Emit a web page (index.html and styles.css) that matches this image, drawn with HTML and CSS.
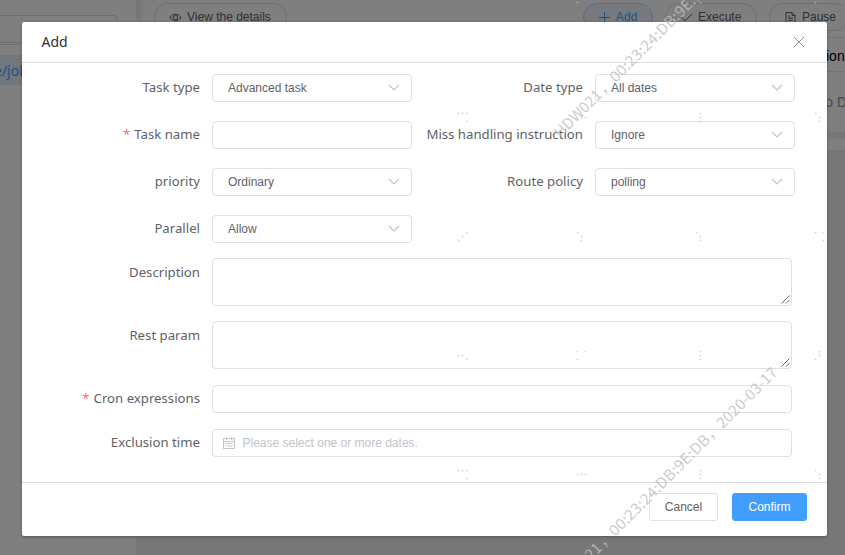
FILE: index.html
```
<!DOCTYPE html>
<html lang="en">
<head>
<meta charset="utf-8">
<title>Add task</title>
<link rel="stylesheet" href="styles.css">
</head>
<body>
<div class="page">
  <aside class="side">
    <div class="side-search"><div class="side-input"></div></div>
    <div class="side-item">e/job</div>
  </aside>
  <main class="main">
    <div class="card">
      <div class="toolbar">
        <button class="pill view"><svg width="13" height="13" viewBox="0 0 13 13"><path d="M.7 6.500Q6.500-.3 12.300 6.500 6.500 13.300.7 6.500Z"/><circle cx="6.500" cy="6.500" r="2.100"/></svg>View the details</button>
        <button class="pill add"><svg width="13" height="13" viewBox="0 0 13 13"><path d="M6.500 1v11M1 6.500h11"/></svg>Add</button>
        <button class="pill run"><svg width="13" height="13" viewBox="0 0 13 13"><path d="M2 6.500l3 3.500 7-7"/></svg>Execute</button>
        <button class="pill pause"><svg width="13" height="13" viewBox="0 0 13 13"><path d="M2 1.500h6l3 3v7.500H2zM8 1.500v3h3M4 5h2M4 7.200h5M4 9.400h5"/></svg>Pause</button>
      </div>
      <div class="thead">ion</div>
      <div class="empty">No Data</div>
    </div>
    <div class="card second"></div>
  </main>
</div>
<div class="mask"></div>
<section class="dialog">
  <header class="dialog-head"><span>Add</span><svg width="12" height="12" viewBox="0 0 12 12"><path d="M1 1l10 10M11 1L1 11"/></svg></header>
  <div class="form">
    <div class="pair">
      <label class="label"><span>Task type</span></label><div class="field">Advanced task<svg class="arrow" width="12" height="8" viewBox="0 0 12 8"><path d="M1 1l5 5 5-5"/></svg></div>
      <label class="label"><span>Date type</span></label><div class="field">All dates<svg class="arrow" width="12" height="8" viewBox="0 0 12 8"><path d="M1 1l5 5 5-5"/></svg></div>
      <label class="label req"><span>Task name</span></label><div class="field"></div>
      <label class="label"><span>Miss handling instruction</span></label><div class="field">Ignore<svg class="arrow" width="12" height="8" viewBox="0 0 12 8"><path d="M1 1l5 5 5-5"/></svg></div>
      <label class="label"><span>priority</span></label><div class="field">Ordinary<svg class="arrow" width="12" height="8" viewBox="0 0 12 8"><path d="M1 1l5 5 5-5"/></svg></div>
      <label class="label"><span>Route policy</span></label><div class="field">polling<svg class="arrow" width="12" height="8" viewBox="0 0 12 8"><path d="M1 1l5 5 5-5"/></svg></div>
      <label class="label"><span>Parallel</span></label><div class="field">Allow<svg class="arrow" width="12" height="8" viewBox="0 0 12 8"><path d="M1 1l5 5 5-5"/></svg></div>
    </div>
    <div class="row tall"><label class="label"><span>Description</span></label><div class="field area"><svg class="grip" width="9" height="9" viewBox="0 0 9 9"><path d="M.5 8.500l8-8M5 8.500l3.500-3.500"/></svg></div></div>
    <div class="row tall"><label class="label"><span>Rest param</span></label><div class="field area"><svg class="grip" width="9" height="9" viewBox="0 0 9 9"><path d="M.5 8.500l8-8M5 8.500l3.500-3.500"/></svg></div></div>
    <div class="row tight"><label class="label req"><span>Cron expressions</span></label><div class="field"></div></div>
    <div class="row"><label class="label"><span>Exclusion time</span></label><div class="field date"><svg width="12" height="12" viewBox="0 0 12 12"><path d="M.5 1.500h11v10H.5zM.5 4.500h11M3.500 0v3M8.500 0v3M2.500 6.500h2M5 6.500h2M7.500 6.500h2M2.500 9h2M5 9h2M7.500 9h2"/></svg>Please select one or more dates.</div></div>
  </div>
  <footer class="dialog-foot"><button class="btn">Cancel</button><button class="btn primary">Confirm</button></footer>
</section>
<svg class="watermark" width="845" height="555" viewBox="0 0 845 555">
  <defs><path id="p" d="M-1.500 0h3M0-1.500v3"/></defs>
  <g class="dots">
    <use href="#p" x="577.5" y="2.500"/><use href="#p" x="700.5" y="2.500"/><use href="#p" x="815.5" y="2.500"/>
    <use href="#p" x="458.5" y="113.500"/><use href="#p" x="462.5" y="113.500"/><use href="#p" x="466.5" y="113.500"/><use href="#p" x="466.5" y="121.500"/>
    <use href="#p" x="581.5" y="117.500"/><use href="#p" x="585.5" y="117.500"/>
    <use href="#p" x="700.5" y="113.500"/><use href="#p" x="700.5" y="117.500"/><use href="#p" x="700.5" y="121.500"/>
    <use href="#p" x="815.5" y="113.500"/><use href="#p" x="819.5" y="117.500"/><use href="#p" x="819.5" y="121.500"/>
    <use href="#p" x="458.5" y="240.500"/><use href="#p" x="462.5" y="236.500"/><use href="#p" x="466.5" y="232.500"/>
    <use href="#p" x="577.5" y="232.500"/><use href="#p" x="581.5" y="236.500"/><use href="#p" x="581.5" y="240.500"/>
    <use href="#p" x="696.5" y="232.500"/><use href="#p" x="700.5" y="236.500"/><use href="#p" x="700.5" y="240.500"/>
    <use href="#p" x="815.5" y="232.500"/><use href="#p" x="823.5" y="232.500"/><use href="#p" x="823.5" y="240.500"/>
    <use href="#p" x="458.5" y="355.500"/><use href="#p" x="462.5" y="355.500"/><use href="#p" x="466.5" y="359.500"/>
    <use href="#p" x="577.5" y="351.500"/><use href="#p" x="585.5" y="351.500"/><use href="#p" x="577.5" y="359.500"/>
    <use href="#p" x="700.5" y="351.500"/><use href="#p" x="700.5" y="355.500"/><use href="#p" x="700.5" y="359.500"/>
    <use href="#p" x="819.5" y="351.500"/><use href="#p" x="819.5" y="355.500"/><use href="#p" x="815.5" y="359.500"/>
    <use href="#p" x="458.5" y="470.500"/><use href="#p" x="462.5" y="470.500"/><use href="#p" x="466.5" y="470.500"/><use href="#p" x="466.5" y="478.500"/>
    <use href="#p" x="577.5" y="474.500"/><use href="#p" x="581.5" y="474.500"/><use href="#p" x="585.5" y="474.500"/>
    <use href="#p" x="700.5" y="470.500"/><use href="#p" x="700.5" y="474.500"/><use href="#p" x="700.5" y="478.500"/>
    <use href="#p" x="815.5" y="470.500"/><use href="#p" x="819.5" y="474.500"/><use href="#p" x="819.5" y="478.500"/>
  </g>
  <g class="mark" transform="translate(560.5 138.5) rotate(-45)"><text x="0" textLength="60" lengthAdjust="spacingAndGlyphs">HDW021</text><text x="61.500">，</text><text x="78" textLength="136" lengthAdjust="spacingAndGlyphs">00:23:24:DB:9E:DB</text></g>
  <g class="mark" transform="translate(560.5 591.5) rotate(-45)"><text x="0" textLength="60" lengthAdjust="spacingAndGlyphs">HDW021</text><text x="61.500">，</text><text x="77" textLength="136" lengthAdjust="spacingAndGlyphs">00:23:24:DB:9E:DB</text><text x="213.500">，</text><text x="229.500" textLength="79" lengthAdjust="spacingAndGlyphs">2020-03-17</text></g>
</svg>
</body>
</html>
```
FILE: styles.css
```
* { box-sizing: border-box; }
body { margin: 0; width: 845px; height: 555px; overflow: hidden; font-family: "Liberation Sans", sans-serif; }
svg { fill: none; stroke: currentColor; flex: none; }
button { font-family: inherit; }
.page { display: flex; gap: 6px; width: 845px; height: 555px; background: #eeeeee; overflow: hidden; }
.side { width: 136px; background: #fff; font-family: "Noto Sans", sans-serif; font-size: 14px; flex: none; }
.side-search { height: 43px; padding-top: 15px; border-bottom: 1px solid #dcdfe6; }
.side-input { width: 118px; height: 30px; border: 1px solid #dcdfe6; border-left: 0; border-radius: 0 4px 4px 0; }
.side-item { margin-top: 12px; height: 30px; line-height: 31px; margin-right: 8px; text-indent: -6px; background: #e3eefb; color: #409eff; }
.main { flex: 1; min-width: 0; display: flex; flex-direction: column; gap: 7px; }
.card { height: 132px; background: #fff; overflow: hidden; flex: none; }
.second { height: 11px; }
.toolbar { display: flex; height: 38px; padding: 3px 0 0 12px; border-bottom: 1px solid #e4e7ed; }
.pill { display: flex; align-items: center; gap: 5px; height: 28px; padding: 0 14px; border: 1px solid #dcdfe6; border-radius: 14px; background: #fff; color: #606266; font-size: 12px; white-space: nowrap; flex: none; }
.view { width: 133px; }
.add { width: 70px; margin-left: 296px; background: #ecf5ff; border-color: #b3d8ff; color: #409eff; }
.run { width: 92px; margin-left: 12px; }
.pause { width: 80px; margin-left: 12px; }
.thead { height: 34px; line-height: 36px; padding-left: 684px; border-bottom: 1px solid #e4e7ed; color: #000; font-size: 14px; }
.empty { padding: 20px 0 0 672px; font: 14px "Noto Sans", sans-serif; color: #909399; white-space: nowrap; }
.mask { position: absolute; inset: 0; background: rgba(0, 0, 0, .5); }
.dialog { position: absolute; left: 22px; top: 22px; width: 805px; height: 514px; background: #fff; border-radius: 2px; box-shadow: 0 1px 3px rgba(0, 0, 0, .3); }
.dialog-head { display: flex; align-items: center; justify-content: space-between; height: 41px; padding: 0 22.500px 2px 19.500px; border-bottom: 1px solid #dcdcdc; font: 14px "Noto Sans", sans-serif; color: #303133; }
.dialog-head svg { color: #909399; margin-top: 1px; }
.form { padding: 11px 30px 0 0; height: 419px; }
.pair { display: grid; grid-template-columns: 190px 200px 183px 200px; grid-auto-rows: 28px; row-gap: 19px; margin-bottom: 15px; }
.label { display: block; text-align: right; padding-right: 12px; line-height: 26px; font-family: "Noto Sans", sans-serif; font-size: 13.200px; color: #606266; white-space: nowrap; }
.req::before { content: "*"; color: #f56c6c; margin-right: 4px; }
.field { display: flex; align-items: center; position: relative; height: 28px; padding: 0 15px; border: 1px solid #dcdfe6; border-radius: 4px; background: #fff; color: #606266; font-size: 12px; }
.arrow { margin-left: auto; margin-right: -4px; color: #c0c4cc; stroke-width: 1.200; }
.row { display: grid; grid-template-columns: 190px 580px; margin-bottom: 15px; }
.row + .tight { margin-top: 16px; margin-bottom: 16px; }
.tall .label { line-height: 28px; }
.area { height: 48px; }
.grip { position: absolute; right: 1px; bottom: 1px; color: #555; stroke-width: .9; }
.date { gap: 7.500px; padding-left: 10px; color: #c0c4cc; }
.dialog-foot { display: flex; justify-content: flex-end; gap: 14px; height: 54px; padding: 10px 20px 0 0; border-top: 1px solid #dcdcdc; }
.btn { width: 69px; height: 28px; border: 1px solid #dcdfe6; border-radius: 3px; background: #fff; color: #606266; font-size: 12px; padding: 0; }
.primary { width: 75px; background: #409eff; border-color: #409eff; color: #fff; }
.watermark { position: absolute; left: 0; top: 0; pointer-events: none; }
.dots { stroke: rgba(192, 192, 192, .32); stroke-width: 1; }
.mark { fill: rgba(192, 192, 192, .82); stroke: none; font-family: "Noto Sans CJK SC", sans-serif; font-size: 15px; font-weight: 400; }
```
